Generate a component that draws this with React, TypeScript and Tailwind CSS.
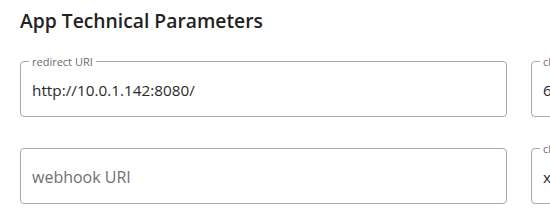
import React from "react";

const fields = [
  {label: "redirect URI", value: "http://10.0.1.142:8080/"},
  {label: "client ID", value: "6f3c2a9e-41b7-4d2e-9a0c-58e1b7d4c203"},
  {label: "webhook URI", value: ""},
  {label: "client secret", value: "xK9f2mQ7vL4pR8tZ1wY6"},
];

function OutlinedField({label, value}: { label: string; value: string }) {
  const filled = value.length > 0;
  return (
    <div className="relative h-[56px] w-[487px]">
      <fieldset
        className={`pointer-events-none absolute inset-0 rounded-[4px] border border-[#a8a8a8] px-[8px] ${filled ? "-top-[5px]" : "top-0"}`}
      >
        {filled ? (
          <legend className="px-[3px] text-[11px] leading-[11px] text-[#6b6b6b]">{label}</legend>
        ) : null}
      </fieldset>
      <div
        className={`flex h-full items-center px-[12px] pt-[2px] ${filled ? "text-[15.3px] text-[#2a2a2a]" : "text-[16px] text-[#707070]"}`}
      >
        {filled ? value : label}
      </div>
    </div>
  );
}

export default function App() {
  return (
    <div className="h-[210px] w-[550px] overflow-hidden bg-white font-['Open_Sans',sans-serif]">
      <div className="px-[20px] pt-[8px]">
        <h2 className="text-[19.3px] font-semibold leading-[26px] text-[#222]">App Technical Parameters</h2>
        <div className="mt-[27px] grid w-[998px] grid-cols-[487px_487px] gap-x-[24px] gap-y-[31px]">
          {fields.map((f) => (
            <OutlinedField key={f.label} label={f.label} value={f.value}/>
          ))}
        </div>
      </div>
    </div>
  );
}
